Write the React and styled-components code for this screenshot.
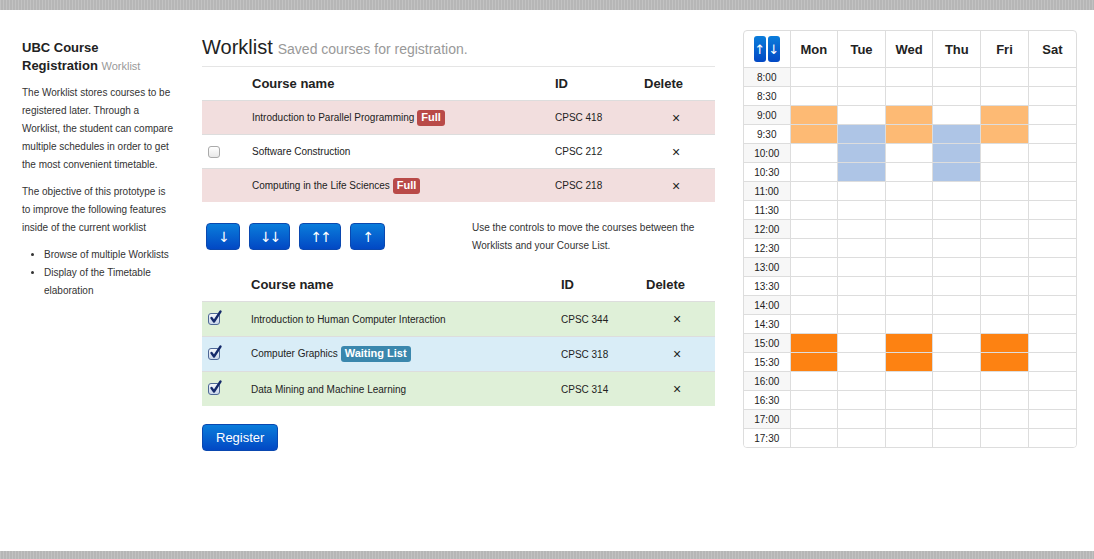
import React from 'react';
import styled, {createGlobalStyle} from 'styled-components';

const GlobalStyle = createGlobalStyle`
  html, body {
    margin: 0;
    padding: 0;
    background: #fff;
    font-family: "Liberation Sans", Arial, sans-serif;
    color: #333;
  }
`;

const Page = styled.div`
  display: flex;
  flex-direction: column;
  height: 100vh;
`;

const Band = styled.div`
  height: ${p => p.$h}px;
  flex-shrink: 0;
  background-color: #bdbdbd;
  background-image: repeating-linear-gradient(90deg, rgba(255,255,255,0.08) 0 1px, rgba(0,0,0,0.04) 1px 3px);
`;

const Content = styled.div`
  flex: 1;
  display: flex;
  align-items: flex-start;
  padding: 20px 0 0 22px;
`;

const Sidebar = styled.aside`
  width: 152px;
  margin-top: 9px;
  margin-right: 6px;
  font-size: 10px;
  line-height: 18px;
`;

const SideTitle = styled.h1`
  margin: 0 0 9px;
  max-width: 125px;
  font-size: 13px;
  line-height: 18px;
  font-weight: bold;
  color: #222;
  small {
    font-size: 11px;
    font-weight: normal;
    color: #999;
  }
`;

const SideText = styled.p`
  margin: 0 0 9px;
`;

const SideList = styled.ul`
  margin: 0;
  padding-left: 22px;
`;

const Main = styled.main`
  width: 513px;
  margin-left: 22px;
  margin-top: 6px;
`;

const Heading = styled.div`
  border-bottom: 1px solid #e5e5e5;
  padding-bottom: 8px;
  display: flex;
  align-items: baseline;
  gap: 5px;
`;

const HeadTitle = styled.span`
  font-size: 20px;
  line-height: 22px;
  color: #222;
`;

const HeadSub = styled.span`
  font-size: 14px;
  color: #999;
`;

const Table = styled.table`
  width: 100%;
  border-collapse: collapse;
  table-layout: fixed;
`;

const Col = styled.col`
  width: ${p => p.$w ? `${p.$w}px` : 'auto'};
`;

const Th = styled.th`
  text-align: left;
  font-size: 13px;
  font-weight: bold;
  color: #222;
  height: 33px;
  padding: 0 8px;
  padding-left: ${p => p.$pl ?? 8}px;
  vertical-align: middle;
`;

const rowColors = {
  error: '#f2dede',
  success: '#dff0d8',
  info: '#d9edf7',
  plain: 'transparent',
};

const Tr = styled.tr`
  background: ${p => rowColors[p.$tone]};
  border-top: 1px solid #ddd;
`;

const Td = styled.td`
  height: ${p => p.$h || 33}px;
  padding: 0 8px;
  font-size: 10px;
  color: #222;
  vertical-align: middle;
  padding-left: ${p => p.$pl ?? 8}px;
`;

const Label = styled.span`
  display: inline-block;
  margin-left: 3px;
  padding: 1px 4px 2px;
  border-radius: 3px;
  font-size: 11px;
  font-weight: bold;
  line-height: 13px;
  color: #fff;
  background: ${p => p.$tone === 'info' ? '#3a87ad' : '#b94a48'};
`;

const Remove = styled.span`
  font-size: 14px;
  color: #222;
`;

const Box = styled.span`
  display: inline-flex;
  vertical-align: middle;
  width: 12px;
  height: 12px;
  border: 1px solid ${p => p.$checked ? '#4d6796' : '#aaa'};
  border-radius: 3px;
  background: ${p => p.$checked ? 'linear-gradient(#f4f7fc, #c9d6ea)' : 'linear-gradient(#fff, #e8e8e8)'};
  box-sizing: border-box;
  position: relative;
  svg {
    position: absolute;
    left: 0px;
    top: -4px;
  }
`;

function Checkbox({checked}) {
  return (
    <Box $checked={checked}>
      {checked && (
        <svg width="13" height="14" viewBox="0 0 13 14">
          <path d="M2.5 8 L5 11.5 L11.5 1.5" fill="none" stroke="#14296a" strokeWidth="2.3" strokeLinecap="round" strokeLinejoin="round" />
        </svg>
      )}
    </Box>
  );
}

const Controls = styled.div`
  display: flex;
  align-items: flex-start;
  margin: 21px 0 18px;
  height: 27px;
`;

const ButtonGroup = styled.div`
  display: flex;
  gap: 9px;
  padding-left: 4px;
  width: 266px;
`;

const Button = styled.button`
  height: 27px;
  min-width: ${p => p.$w || 34}px;
  padding: 0 10px;
  border: 1px solid #0a48b0;
  border-radius: 4px;
  background: linear-gradient(#0a7ddb, #0248c4);
  color: #fff;
  font-family: "DejaVu Sans", sans-serif;
  font-size: 14px;
  letter-spacing: -2px;
  cursor: pointer;
`;

const ControlsText = styled.p`
  margin: -4px 0 0;
  font-size: 10px;
  line-height: 18px;
  width: 240px;
`;

const RegisterButton = styled(Button)`
  margin-top: 18px;
  letter-spacing: 0;
  font-family: "Liberation Sans", Arial, sans-serif;
  font-size: 13px;
  padding: 0 13px;
`;

const Calendar = styled.div`
  margin-left: 28px;
  width: 332px;
  border: 1px solid #ddd;
  border-radius: 4px;
  overflow: hidden;
`;

const CalTable = styled.table`
  width: 100%;
  border-collapse: collapse;
  table-layout: fixed;
`;

const CalTh = styled.th`
  height: 36px;
  font-size: 13px;
  font-weight: bold;
  color: #222;
  border-left: 1px solid #ddd;
  padding: 0;
  &:first-child {
    border-left: none;
  }
`;

const TimeCell = styled.td`
  height: 18px;
  padding: 0;
  text-align: center;
  font-size: 10px;
  color: #222;
  border-top: 1px solid #ddd;
  background: ${p => p.$odd ? '#fff' : '#f7f7f7'};
`;

const eventColors = {
  peach: '#fdba74',
  blue: '#aec5e6',
  orange: '#fd8212',
};

const SlotCell = styled.td`
  height: 18px;
  padding: 0;
  border-top: 1px solid #ddd;
  border-left: 1px solid #ddd;
  background: ${p => eventColors[p.$ev] || '#fff'};
`;

const Toggle = styled.div`
  display: flex;
  justify-content: center;
  gap: 2px;
`;

const ToggleBtn = styled.span`
  width: 12px;
  height: 26px;
  border-radius: 3px;
  background: linear-gradient(#0a7ddb, #0248c4);
  color: #fff;
  font-family: "DejaVu Sans", sans-serif;
  font-size: 13px;
  font-weight: normal;
  display: flex;
  align-items: center;
  justify-content: center;
`;

const worklist = [
  {name: 'Introduction to Parallel Programming', id: 'CPSC 418', full: true},
  {name: 'Software Construction', id: 'CPSC 212'},
  {name: 'Computing in the Life Sciences', id: 'CPSC 218', full: true},
];

const courseList = [
  {name: 'Introduction to Human Computer Interaction', id: 'CPSC 344', tone: 'success'},
  {name: 'Computer Graphics', id: 'CPSC 318', tone: 'info', waiting: true},
  {name: 'Data Mining and Machine Learning', id: 'CPSC 314', tone: 'success'},
];

const days = ['Mon', 'Tue', 'Wed', 'Thu', 'Fri', 'Sat'];
const times = [];
for (let h = 8; h < 18; h++) {
  times.push(`${h}:00`, `${h}:30`);
}

const events = {
  Mon: {'9:00': 'peach', '9:30': 'peach', '15:00': 'orange', '15:30': 'orange'},
  Tue: {'9:30': 'blue', '10:00': 'blue', '10:30': 'blue'},
  Wed: {'9:00': 'peach', '9:30': 'peach', '15:00': 'orange', '15:30': 'orange'},
  Thu: {'9:30': 'blue', '10:00': 'blue', '10:30': 'blue'},
  Fri: {'9:00': 'peach', '9:30': 'peach', '15:00': 'orange', '15:30': 'orange'},
  Sat: {},
};

export default function App() {
  return (
    <Page>
      <GlobalStyle />
      <Band $h={10} />
      <Content>
        <Sidebar>
          <SideTitle>UBC Course Registration <small>Worklist</small></SideTitle>
          <SideText>
            The Worklist stores courses to be registered later. Through a Worklist, the student can compare
            multiple schedules in order to get the most convenient timetable.
          </SideText>
          <SideText>
            The objective of this prototype is to improve the following features inside of the current worklist
          </SideText>
          <SideList>
            <li>Browse of multiple Worklists</li>
            <li>Display of the Timetable elaboration</li>
          </SideList>
        </Sidebar>

        <Main>
          <Heading>
            <HeadTitle>Worklist</HeadTitle>
            <HeadSub>Saved courses for registration.</HeadSub>
          </Heading>

          <Table>
            <colgroup>
              <Col $w={50} />
              <Col />
              <Col $w={83} />
              <Col $w={85} />
            </colgroup>
            <thead>
              <tr>
                <Th />
                <Th $pl={0}>Course name</Th>
                <Th>ID</Th>
                <Th $pl={14}>Delete</Th>
              </tr>
            </thead>
            <tbody>
              {worklist.map(c => (
                <Tr key={c.id} $tone={c.full ? 'error' : 'plain'}>
                  <Td $pl={6}>{!c.full && <Checkbox />}</Td>
                  <Td $pl={0}>{c.name}{c.full && <Label>Full</Label>}</Td>
                  <Td>{c.id}</Td>
                  <Td $pl={42}><Remove>×</Remove></Td>
                </Tr>
              ))}
            </tbody>
          </Table>

          <Controls>
            <ButtonGroup>
              <Button $w={34}>↓</Button>
              <Button $w={41}>↓↓</Button>
              <Button $w={41}>↑↑</Button>
              <Button $w={35}>↑</Button>
            </ButtonGroup>
            <ControlsText>Use the controls to move the courses between the Worklists and your Course List.</ControlsText>
          </Controls>

          <Table>
            <colgroup>
              <Col $w={49} />
              <Col />
              <Col $w={85} />
              <Col $w={77} />
            </colgroup>
            <thead>
              <tr>
                <Th />
                <Th $pl={0}>Course name</Th>
                <Th>ID</Th>
                <Th>Delete</Th>
              </tr>
            </thead>
            <tbody>
              {courseList.map(c => (
                <Tr key={c.id} $tone={c.tone}>
                  <Td $h={34} $pl={6}><Checkbox checked /></Td>
                  <Td $h={34} $pl={0}>{c.name}{c.waiting && <Label $tone="info">Waiting List</Label>}</Td>
                  <Td $h={34}>{c.id}</Td>
                  <Td $h={34} $pl={35}><Remove>×</Remove></Td>
                </Tr>
              ))}
            </tbody>
          </Table>

          <RegisterButton>Register</RegisterButton>
        </Main>

        <Calendar>
          <CalTable>
            <colgroup>
              <Col $w={46} />
              {days.map(d => <Col key={d} />)}
            </colgroup>
            <thead>
              <tr>
                <CalTh>
                  <Toggle>
                    <ToggleBtn>↑</ToggleBtn>
                    <ToggleBtn>↓</ToggleBtn>
                  </Toggle>
                </CalTh>
                {days.map(d => <CalTh key={d}>{d}</CalTh>)}
              </tr>
            </thead>
            <tbody>
              {times.map((t, i) => (
                <tr key={t}>
                  <TimeCell $odd={i % 2 === 1}>{t}</TimeCell>
                  {days.map(d => <SlotCell key={d} $ev={events[d][t]} />)}
                </tr>
              ))}
            </tbody>
          </CalTable>
        </Calendar>
      </Content>
      <Band $h={8} />
    </Page>
  );
}
